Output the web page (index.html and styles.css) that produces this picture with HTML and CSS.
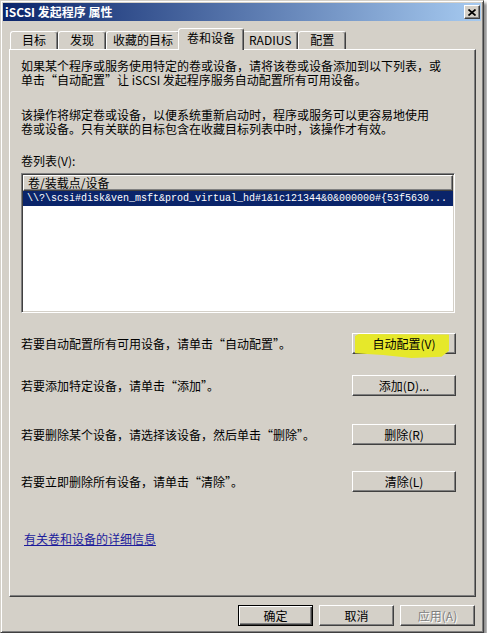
FILE: index.html
```html
<!DOCTYPE html>
<html lang="zh-CN">
<head>
    <meta charset="UTF-8">
    <meta name="viewport" content="width=device-width, initial-scale=1.0">
    <title>iSCSI 发起程序 属性</title>
    <link rel="stylesheet" href="styles.css">
</head>
<body>
    <div class="window">
        <div class="titlebar">
            <span class="title">iSCSI 发起程序 属性</span>
            <button class="close-btn" aria-label="关闭">
                <svg width="8" height="7" viewBox="0 0 8 7">
                    <path d="M0.5 0.5 L7.5 6.5 M7.5 0.5 L0.5 6.5" stroke="#000" stroke-width="1.7" fill="none"/>
                </svg>
            </button>
        </div>

        <div class="tabs">
            <div class="tab">目标</div>
            <div class="tab">发现</div>
            <div class="tab">收藏的目标</div>
            <div class="tab active">卷和设备</div>
            <div class="tab">RADIUS</div>
            <div class="tab">配置</div>
        </div>

        <div class="panel">
            <p class="intro">如果某个程序或服务使用特定的卷或设备，请将该卷或设备添加到以下列表，或<br>单击“自动配置”让 iSCSI 发起程序服务自动配置所有可用设备。</p>
            <p class="intro second">该操作将绑定卷或设备，以便系统重新启动时，程序或服务可以更容易地使用<br>卷或设备。只有关联的目标包含在收藏目标列表中时，该操作才有效。</p>

            <div class="list-label">卷列表(V):</div>
            <div class="listbox">
                <div class="list-header">卷/装载点/设备</div>
                <div class="list-row selected">\\?\scsi#disk&amp;ven_msft&amp;prod_virtual_hd#1&amp;1c121344&amp;0&amp;000000#{53f5630...</div>
            </div>

            <div class="actions">
                <div class="action-row">
                    <span>若要自动配置所有可用设备，请单击“自动配置”。</span>
                    <button class="btn action-btn">自动配置(V)<span class="highlight"></span></button>
                </div>
                <div class="action-row">
                    <span>若要添加特定设备，请单击“添加”。</span>
                    <button class="btn action-btn">添加(D)...</button>
                </div>
                <div class="action-row wide-gap">
                    <span>若要删除某个设备，请选择该设备，然后单击“删除”。</span>
                    <button class="btn action-btn">删除(R)</button>
                </div>
                <div class="action-row mid-gap">
                    <span>若要立即删除所有设备，请单击“清除”。</span>
                    <button class="btn action-btn">清除(L)</button>
                </div>
            </div>

            <a class="more-link" href="#">有关卷和设备的详细信息</a>
        </div>

        <div class="footer">
            <button class="btn default">确定</button>
            <button class="btn">取消</button>
            <button class="btn" disabled>应用(A)</button>
        </div>
    </div>
</body>
</html>
```

FILE: styles.css
```css
* {
    box-sizing: border-box;
}

body {
    margin: 0;
    background-color: #ffffff;
    font-family: "Noto Sans CJK SC", "Noto Sans", sans-serif;
    font-size: 12px;
    color: #000000;
}

.window {
    width: 484px;
    height: 633px;
    background-color: #d4d0c8;
    border: 1px solid;
    border-color: #d4d0c8 #404040 #404040 #d4d0c8;
    box-shadow: inset 1px 1px #ffffff, inset -1px -1px #808080, 3px 3px 3px rgba(0, 0, 0, 0.45);
    padding: 2px;
    display: flex;
    flex-direction: column;
}

.titlebar {
    height: 18px;
    display: flex;
    align-items: center;
    padding: 0 1px 0 2px;
    background: linear-gradient(to right, #0a246a, #a6caf0);
}

.title {
    color: #ffffff;
    font-weight: bold;
    line-height: 18px;
}

.close-btn {
    margin-left: auto;
    width: 16px;
    height: 14px;
    padding: 0;
    background-color: #d4d0c8;
    border: 1px solid;
    border-color: #ffffff #404040 #404040 #ffffff;
    box-shadow: inset -1px -1px #808080;
    display: flex;
    align-items: center;
    justify-content: center;
}

.tabs {
    height: 28px;
    display: flex;
    align-items: flex-end;
    padding-left: 7px;
}

.tab {
    height: 18px;
    min-width: 48px;
    padding: 0 6px;
    text-align: center;
    line-height: 16px;
    background-color: #d4d0c8;
    border: 1px solid;
    border-bottom: none;
    border-color: #ffffff #404040 transparent #ffffff;
    box-shadow: inset -1px 0 #808080;
    border-radius: 3px 3px 0 0;
}

.tab.active {
    height: 22px;
    margin: 0 -2px -1px;
    padding: 0 8px;
    line-height: 18px;
    position: relative;
    z-index: 1;
}

.panel {
    height: 548px;
    margin: 0 5px 0 6px;
    border: 1px solid;
    border-color: #ffffff #404040 #404040 #ffffff;
    box-shadow: inset -1px -1px #808080;
    padding: 9px 19px 0 11px;
    display: flex;
    flex-direction: column;
}

.intro {
    margin: 0;
    line-height: 14px;
}

.intro.second {
    margin-top: 21px;
}

.list-label {
    margin-top: 18px;
    line-height: 14px;
}

.listbox {
    margin-top: 5px;
    height: 140px;
    margin-right: 1px;
    background-color: #ffffff;
    border: 1px solid;
    border-color: #808080 #ffffff #ffffff #808080;
    box-shadow: inset 1px 1px #404040, inset -1px -1px #d4d0c8;
    padding: 1px;
}

.list-header {
    height: 16px;
    line-height: 14px;
    padding-left: 4px;
    background-color: #d4d0c8;
    border: 1px solid;
    border-color: #ffffff #404040 #404040 #ffffff;
    box-shadow: inset -1px -1px #808080;
}

.list-row {
    height: 15px;
    line-height: 15px;
    padding-left: 4px;
    font-family: "Liberation Mono", monospace;
    font-size: 10px;
    white-space: nowrap;
    overflow: hidden;
}

.list-row.selected {
    background-color: #0a246a;
    color: #ffffff;
}

.actions {
    margin-top: 20px;
    display: flex;
    flex-direction: column;
    gap: 21px;
}

.action-row {
    height: 21px;
    display: flex;
    align-items: center;
    justify-content: space-between;
}

.action-row.wide-gap {
    margin-top: 7px;
}

.action-row.mid-gap {
    margin-top: 5px;
}

.btn {
    font-family: inherit;
    font-size: 12px;
    color: #000000;
    width: 75px;
    height: 21px;
    padding: 0;
    line-height: 17px;
    background-color: #d4d0c8;
    border: 1px solid;
    border-color: #ffffff #404040 #404040 #ffffff;
    box-shadow: inset -1px -1px #808080;
}

.action-btn {
    width: 104px;
    position: relative;
    z-index: 0;
}

.btn.default {
    border-color: #000000;
    box-shadow: inset 1px 1px #ffffff, inset -1px -1px #404040, inset -2px -2px #808080;
}

.btn:disabled {
    color: #808080;
    text-shadow: 1px 1px #ffffff;
}

/* marker stroke over the auto-configure button, kept behind the label */
.highlight {
    position: absolute;
    left: 2px;
    top: 0;
    z-index: -1;
    width: 94px;
    height: 24px;
    background-color: #e6e82a;
    clip-path: polygon(0 8%, 4% 0, 100% 2%, 100% 70%, 92% 95%, 60% 100%, 30% 88%, 0 80%);
    pointer-events: none;
}

.more-link {
    margin-top: 40px;
    margin-left: 3px;
    align-self: flex-start;
    line-height: 14px;
    color: #1c1c9c;
    text-decoration: underline;
}

.footer {
    display: flex;
    justify-content: flex-end;
    gap: 6px;
    padding: 8px 6px 0 0;
}
```
